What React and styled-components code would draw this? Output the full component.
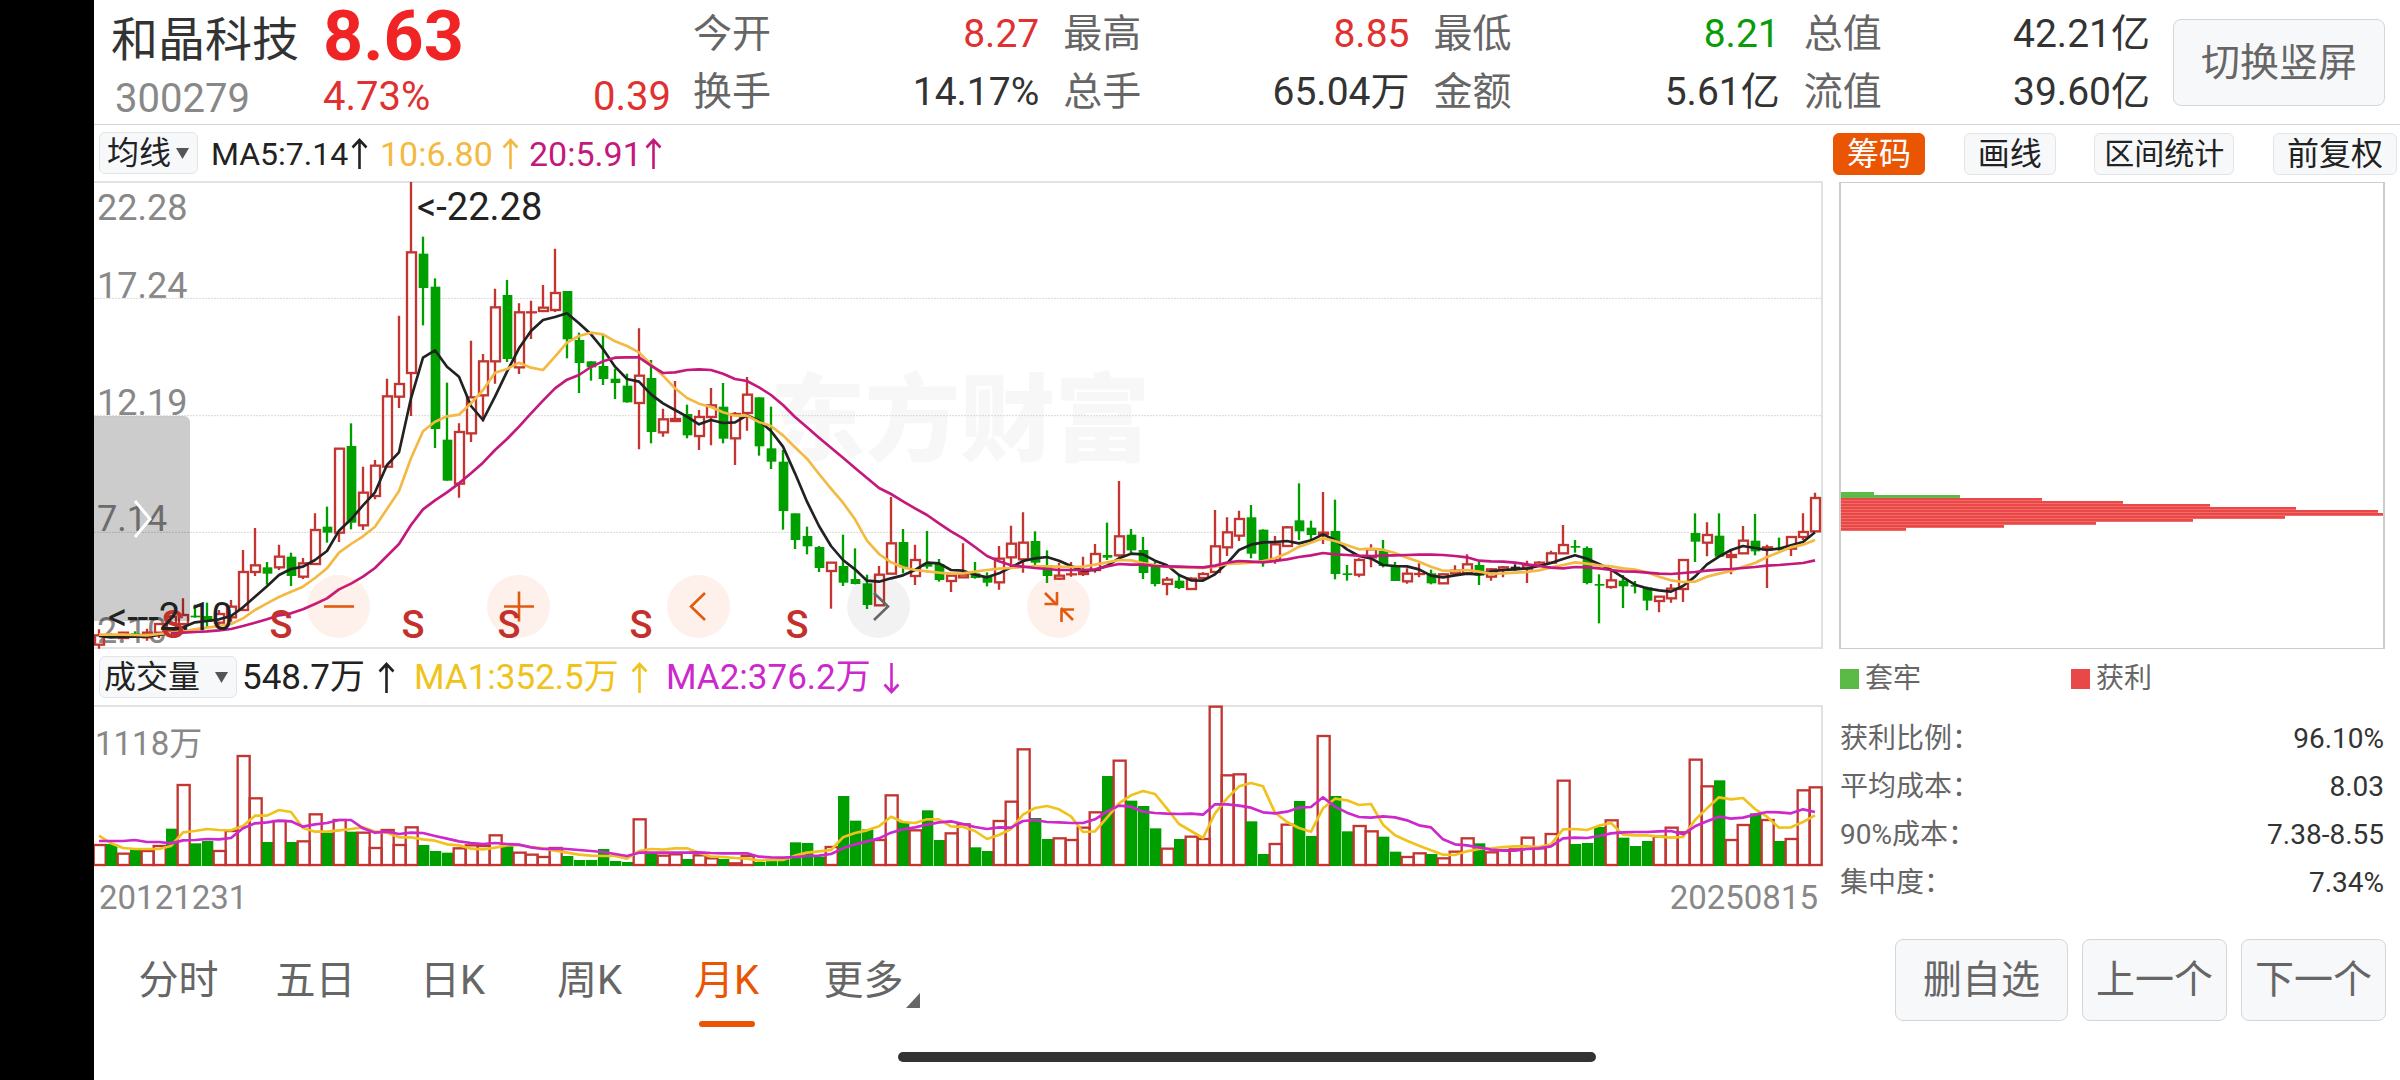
import React from "react";
import styled, { createGlobalStyle } from "styled-components";

/* ---------- chart data (three drawing units per pixel, one candle every 36 units) ---------- */

const STEP = 36;
const FIRST = 15;
const CHART_W = 5187;
const cx = (i) => FIRST + STEP * i;

// r / g / k, high, body top, body bottom, low
const candleBlocks = [
  [-36, [
    ["r",1378,1396,1424,1436],["g",1390,1393,1399,1402],["r",1388,1388,1404,1404],["g",1384,1390,1396,1400],["r",1376,1388,1402,1412],["r",1362,1362,1388,1404],
    ["r",1335,1340,1382,1385],["r",1285,1335,1362,1366],["g",1304,1337,1340,1343],["g",1298,1338,1356,1372],["r",1320,1332,1358,1366],["r",1290,1310,1342,1355],
    ["r",1140,1206,1320,1322],["r",1074,1186,1206,1218],["g",1176,1192,1211,1244],["r",1124,1160,1192,1200],["g",1148,1160,1218,1248],["r",1164,1180,1220,1227],
    ["r",1030,1080,1182,1184],["g",1010,1070,1088,1118],["r",836,836,1088,1116],["g",760,828,1058,1078],["r",890,968,1066,1080],["r",870,887,978,988],
    ["r",626,679,890,892],["r",437,642,680,714],["r",36,247,609,738],["g",200,251,354,466],["g",325,350,777,834],["g",638,809,932,932],
    ["r",760,786,941,983],["r",512,682,790,816],["r",552,574,676,755],["r",356,412,574,641],["g",330,375,567,576],["r",400,427,592,612],
    ["r",392,427,427,507],["r",345,413,423,425],["r",236,369,420,426],
  ]],
  [144, [
    ["g",183,183,328,385],["g",308,330,399,489],["g",394,394,412,452],["g",315,408,447,465],["g",416,446,459,507],["g",431,467,517,518],
    ["r",295,437,519,658],["g",390,444,606,640],["r",536,568,607,620],["r",453,567,573,574],["g",524,552,616,625],["r",540,561,618,660],
    ["r",474,526,561,646],["g",459,530,626,640],["r",546,552,625,705],["r",441,494,549,602],["g",502,502,649,677],["g",530,655,695,717],
    ["g",660,695,843,899],["g",850,850,930,957],["g",890,918,949,973],["g",948,951,1014,1026],["r",998,998,1023,1136],["g",914,1008,1058,1068],
    ["g",955,1047,1062,1063],["g",1034,1060,1125,1137],["r",1008,1034,1126,1127],["r",801,940,1031,1033],
  ]],
  [474, [
    ["g",567,606,682,700],["r",614,660,708,735],["g",573,670,680,686],["g",657,672,720,725],["r",700,707,723,756],["r",610,704,712,714],
    ["g",666,700,714,716],["g",697,710,728,739],["r",618,656,727,749],["r",557,611,652,672],["r",517,608,658,698],["g",574,603,668,676],
    ["g",631,675,708,729],["r",668,707,716,720],["r",666,703,703,710],["r",650,695,702,708],["r",612,642,690,698],["g",548,645,653,660],
    ["r",423,589,646,650],["g",567,584,631,640],["g",591,630,699,717],["g",665,676,732,739],["r",711,719,732,766],["g",705,722,744,747],
    ["r",712,716,747,748],["r",697,702,714,720],["r",510,619,696,698],["r",532,577,622,648],["r",512,537,587,603],["g",495,532,641,655],
    ["g",568,569,664,680],["r",588,613,660,671],["r",558,562,618,620],["g",430,541,574,600],["g",542,563,585,598],["r",456,578,582,612],
    ["g",479,573,702,718],
  ]],
  [834, [
    ["g",315,340,344,362],["r",295,300,344,352],["r",253,268,292,322],["g",240,272,318,322],["g",306,318,363,363],["r",325,341,364,371],
    ["r",310,342,342,352],["g",329,340,370,373],["r",340,343,370,371],["r",316,332,340,344],["r",283,313,340,342],["g",305,315,347,375],
    ["r",325,328,350,362],["r",318,322,330,352],["k",313,320,328,332],["r",302,316,326,369],["r",304,308,316,318],["r",272,280,308,310],
    ["r",195,255,280,282],["g",240,258,262,278],["g",259,264,369,373],["g",343,372,376,490],["r",328,361,381,386],["g",345,362,379,444],
    ["g",363,375,380,400],["g",380,382,422,451],["r",408,410,423,457],["r",372,386,415,428],["r",298,300,387,426],["g",160,219,245,306],
    ["r",187,225,248,289],["g",160,227,290,291],["r",270,285,291,343],["r",198,242,280,282],["g",162,242,274,286],["r",254,262,268,384],
    ["g",233,265,269,272],["r",229,231,266,288],["r",160,216,231,240],["r",98,114,214,216],
  ]],
];
const candles = candleBlocks.flatMap(([d, rows]) =>
  rows.map(([kind, ...v]) => ({ kind, v: v.map((n) => n + d) }))
);

const joinBlocks = (blocks) => blocks.flatMap(([d, ys]) => ys.map((y) => y + d));

const ma5 = joinBlocks([
  [-36, [1398,1402,1401,1400,1400,1395,1388,1372,1357,1353,1348,1338,1312,1280,1249,1215,1197,1190,1170,1143,1082,1048,1006,967,885,847,685,563,541,590,620,708,750,680,605,535,483,450,441]],
  [144, [250,280,313,357,410,447,455,493,520,540,560,583,570,579,577,556,572,603,650,730,815,888,948,990,1018,1052,1055,1045]],
  [474, [706,690,668,670,690,692,704,712,700,682,663,655,651,662,678,692,690,677,655,641,643,662,676,705,721,722,703,670,630,614,607,606,603,610,601,583,600]],
  [834, [268,288,295,315,318,319,328,347,352,346,341,343,334,330,328,325,318,309,297,286,296,312,329,352,374,385,391,395,378,350,313,290,270,258,264,270,266,256,246,217]],
]);

const ma10 = joinBlocks([
  [-36, [1394,1394,1394,1395,1396,1392,1388,1383,1378,1373,1368,1362,1345,1320,1300,1281,1265,1250,1224,1195,1148,1122,1099,1070,1017,963,865,784,755,739,734,700,660,608,597,578,593,600,560]],
  [144, [338,318,308,313,334,348,367,403,437,475,504,521,531,547,557,557,576,588,616,652,686,732,776,818,868,932,972,997]],
  [474, [682,690,694,698,701,700,695,690,686,684,681,678,679,680,681,680,674,667,660,661,669,675,681,682,683,684,680,672,670,668,663,655,640,620,608,595,603]],
  [834, [256,268,266,269,279,293,305,320,332,333,330,335,341,340,338,336,331,322,315,307,311,316,319,325,329,337,350,361,366,365,350,341,333,320,309,291,277,262,254,240]],
]);

const ma20Start = 6;
const ma20 = joinBlocks([
  [-36, [1390,1388,1386,1384,1381,1377,1368,1358,1348,1336,1330,1318,1302,1285,1258,1241,1220,1194,1158,1122,1065,1018,991,967,940,910,878,840,807,770,730,692,655]],
  [144, [449,435,411,394,383,382,382,407,429,427,420,418,420,431,447,453,472,495,525,561,592,623,653,683,714,744,774,792]],
  [474, [484,505,525,550,574,595,621,648,664,676,680,684,687,690,690,690,688,679,672,674,674,678,679,680,681,682,677,668,663,665,667,663,658,651,646,639,643]],
  [834, [285,287,288,287,286,285,284,284,285,288,292,302,304,305,308,313,318,323,325,321,322,325,330,334,335,338,341,342,339,336,332,329,327,324,321,317,315,312,309,301]],
]);

const volumes = [
  ["r",585],["g",582],["r",611],["g",600],["r",603],["r",588],["g",536],["r",405],["g",580],["g",573],["r",603],["r",543],["r",318],["r",445],["g",576],["r",513],["g",576],["r",574],["r",493],["g",548],
  ["r",510],["g",545],["r",548],["r",594],["r",540],["r",585],["r",532],["g",585],["g",603],["g",608],["r",595],["r",586],["r",588],["r",556],["g",586],["r",608],["r",614],["r",621],["r",594],["g",618],
  ["g",630],["g",630],["g",597],["g",633],["g",636],["r",508],["g",608],["r",617],["r",613],["g",627],["r",616],["r",625],["g",627],["r",640],["r",618],["g",636],["g",630],["g",626],["g",577],["g",579],
  ["g",620],["r",591],["g",438],["g",512],["g",538],["r",570],["r",436],["g",517],["r",541],["g",481],["g",570],["r",550],["r",523],["g",592],["g",603],["r",513],["r",455],["r",298],["g",504],["g",567],
  ["r",565],["r",570],["r",533],["r",487],["g",378],["r",332],["g",452],["g",468],["g",535],["r",596],["g",567],["r",560],["r",567],["r",170],["r",376],["r",373],["g",514],["g",612],["r",582],["r",524],
  ["g",453],["g",558],["r",258],["g",438],["g",544],["r",528],["r",544],["g",560],["g",605],["r",621],["r",610],["g",612],["r",625],["r",605],["r",565],["g",580],["r",607],["r",600],["r",598],["r",563],
  ["r",595],["r",552],["r",392],["g",582],["g",579],["g",531],["r",511],["g",563],["g",588],["g",573],["r",560],["r",533],["r",547],["r",329],["r",409],["g",391],["r",570],["r",525],["g",490],["r",510],
  ["g",573],["r",567],["r",421],["r",412],
].map(([kind, y]) => ({ kind, y: y - 168 }));

const volShort = joinBlocks([
  [-168, [557,580,594,597,597,597,588,547,543,537,540,541,528,497,497,480,486,534,545,545,541,537,532,545,548,562,562,568,572,583,586,596,598,593,586,585,591,595,602,608,614,617,618,618,626,603,597,599,595,595,608,620,621,624,626,632,630,630,617,608,604,600,562,549,541,529,500]],
  [-48, [396,399,388,388,409,411,423,447,435,417,374,354,348,358,379,426,424,383,340,316,303,312,356,402,423,444,370,325,289,279,289,368,396,414,425,355,326,331,345,342,404,436,452,467,481,494,495,484,477,475,471,469,469,471,463,418,417,420,407,399,434,436,436,440,443,441,390,355,322,328,324,357,380,413,412,396,376]],
]);
const volLong = joinBlocks([
  [-168, [573,573,573,570,576,576,580,571,570,567,568,564,535,520,517,512,514,530,523,519,510,510,535,548,545,552,548,549,558,566,574,579,582,579,582,584,592,597,596,597,600,603,606,612,618,608,608,608,608,608,607,609,610,610,610,620,622,623,621,618,617,612,595,583,574,565,548]],
  [-48, [418,412,404,397,394,402,411,417,412,413,393,390,396,397,399,399,388,365,347,350,365,369,371,372,371,374,343,343,347,353,367,370,365,353,351,322,350,368,381,383,379,382,391,406,412,448,463,466,472,479,482,482,477,475,469,445,443,444,438,430,427,426,426,424,423,433,409,394,380,386,383,374,366,367,370,358,366]],
]);

const linePoints = (ys, start = 0) => ys.map((y, i) => `${cx(i + start)},${y}`).join(" ");

const UP = "#c23531";
const DOWN = "#009f00";
const candleColor = { r: UP, g: DOWN, k: "#222222" };

const chipRows = [
  [33, "g"], [117, "g"], [201, "r"], [285, "r"], [370, "r"], [454, "r"], [538, "r"],
  [543, "r"], [447, "r"], [352, "r"], [257, "r"], [161, "r"], [66, "r"],
];

const quotes = [
  ["今开", "8.27", "up"], ["最高", "8.85", "up"], ["最低", "8.21", "down"], ["总值", "42.21亿"],
  ["换手", "14.17%"], ["总手", "65.04万"], ["金额", "5.61亿"], ["流值", "39.60亿"],
];

const priceTicks = [["22.28", 9], ["17.24", 87], ["12.19", 204], ["7.14", 320], ["2.10", 432]];
const signals = [79, 187, 319, 415, 547, 703];
const stats = [["获利比例：", "96.10%"], ["平均成本：", "8.03"], ["90%成本：", "7.38-8.55"], ["集中度：", "7.34%"]];
const periods = ["分时", "五日", "日K", "周K", "月K", "更多"];

/* ---------- styles ---------- */

const GlobalStyle = createGlobalStyle`
  * { box-sizing: border-box; }
  body { margin: 0; background: #fff; }
  body, button, select {
    font-family: Roboto, "Noto Sans CJK SC", sans-serif;
    color: #333;
  }
`;

const Screen = styled.div`
  display: flex;
  min-height: 100vh;
`;
const CutoutStrip = styled.div`
  flex: 0 0 94px;
  background: #000;
`;
const Main = styled.main`
  flex: 1;
  min-width: 0;
  display: flex;
  flex-direction: column;
`;

const Header = styled.header`
  display: flex;
  height: 125px;
  padding: 5px 15px 0 17px;
  border-bottom: 1px solid #d4d4d4;
`;
const Identity = styled.div`
  display: grid;
  grid-template-columns: 212px 348px;
  grid-template-rows: 62px 56px;
  width: 582px;
`;
const StockName = styled.h1`
  margin: 0;
  font-size: 47px;
  font-weight: 400;
  line-height: 70px;
`;
const LastPrice = styled.strong`
  font-size: 70px;
  font-weight: 700;
  line-height: 62px;
  color: #f02424;
`;
const StockCode = styled.span`
  padding-left: 4px;
  font-size: 40px;
  line-height: 64px;
  color: #888;
`;
const ChangeRow = styled.div`
  display: flex;
  justify-content: space-between;
  font-size: 40px;
  line-height: 60px;
  color: #e03030;
`;
const QuoteGrid = styled.dl`
  flex: 1;
  display: grid;
  grid-template-columns: repeat(4, 1fr);
  grid-auto-rows: 58px;
  column-gap: 24px;
  margin: 0 23px 0 0;
`;
const Quote = styled.div`
  display: flex;
  justify-content: space-between;
  line-height: 58px;
`;
const QuoteLabel = styled.dt`
  font-size: 39px;
  color: #666;
`;
const QuoteValue = styled.dd`
  margin: 0;
  font-size: 39px;
  color: ${(p) => (p.$tone === "up" ? "#e03030" : p.$tone === "down" ? "#089c08" : "#333")};
`;

const PanelButton = styled.button`
  height: ${(p) => p.$height}px;
  padding: 0 ${(p) => p.$pad}px;
  border: 1px solid #d4d6d9;
  border-radius: 8px;
  background: #f7f8fa;
  font-size: 39px;
  line-height: 40px;
  color: #666;
  white-space: nowrap;
`;
const RotateButton = styled(PanelButton)`
  margin-top: 14px;
  width: 212px;
`;

const Body = styled.div`
  display: grid;
  grid-template-columns: minmax(0, 1fr) 577px;
`;
const ChartColumn = styled.section``;
const Toolbar = styled.div`
  display: flex;
  align-items: center;
  height: 56px;
  padding: 0 5px;
`;
const SelectBox = styled.label`
  position: relative;
  display: block;
  margin-right: ${(p) => p.$gap}px;
  svg {
    position: absolute;
    right: 9px;
    top: 16px;
    pointer-events: none;
  }
`;
const Select = styled.select`
  appearance: none;
  display: block;
  width: ${(p) => p.$width}px;
  height: 42px;
  padding: 0 0 0 ${(p) => p.$pad}px;
  border: 1px solid #e2e5e8;
  border-radius: 6px;
  background: #f7f8fa;
  font-size: 32px;
  line-height: 40px;
  color: #222;
`;
const Reading = styled.span`
  display: flex;
  align-items: center;
  justify-content: space-between;
  width: ${(p) => p.$width}px;
  margin-right: ${(p) => p.$gap}px;
  padding-top: 2px;
  font-size: ${(p) => p.$size}px;
  line-height: 40px;
  white-space: nowrap;
  color: ${(p) => p.$color};
`;

const PriceChart = styled.div`
  position: relative;
`;
const Plot = styled.svg`
  position: relative;
  display: block;
  width: 100%;
  height: ${(p) => p.$height}px;
`;
const Watermark = styled.span`
  position: absolute;
  left: 676px;
  top: 172px;
  font-family: "Noto Sans CJK SC", sans-serif;
  font-size: 95px;
  font-weight: 900;
  line-height: 120px;
  color: #f7f7f7;
`;
const AxisLabel = styled.span`
  position: absolute;
  left: 3px;
  top: ${(p) => p.$top}px;
  font-size: 36px;
  line-height: 36px;
  color: #888;
`;
const VolumeLabel = styled(AxisLabel)`
  left: 1px;
  font-size: 33px;
`;
const Extreme = styled(AxisLabel)`
  left: ${(p) => p.$left}px;
  font-size: 38px;
  color: #222;
`;
const Signal = styled.span`
  position: absolute;
  left: ${(p) => p.$left}px;
  bottom: 5px;
  width: 28px;
  margin-left: -14px;
  text-align: center;
  font-size: 38px;
  font-weight: 500;
  line-height: 38px;
  color: #c4302b;
`;
const DrawerHandle = styled.button`
  position: absolute;
  left: 0;
  top: 235px;
  width: 96px;
  height: 205px;
  padding: 0;
  border: 0;
  border-radius: 0 6px 0 0;
  background: rgba(0, 0, 0, 0.2);
  svg { display: block; margin: 0 auto; }
`;
const ChartControls = styled.div`
  position: absolute;
  left: 213px;
  bottom: 11px;
  display: flex;
  gap: 117px;
`;
const RoundButton = styled.button`
  display: grid;
  place-items: center;
  width: 63px;
  height: 63px;
  padding: 0;
  border: 0;
  border-radius: 50%;
  background: ${(p) => (p.$muted ? "rgba(0, 0, 0, 0.05)" : "rgba(240, 90, 20, 0.09)")};
  color: ${(p) => (p.$muted ? "#666" : "#e05a10")};
`;
const Dates = styled.div`
  display: flex;
  justify-content: space-between;
  padding: 0 5px;
  font-size: 33px;
  line-height: 61px;
  color: #888;
`;

const ChipColumn = styled.aside`
  padding-right: 15px;
`;
const ChipTabs = styled.div`
  display: flex;
  justify-content: space-between;
  align-items: center;
  height: 57px;
  margin-right: -12px;
  padding-left: 10px;
`;
const ChipTab = styled.button`
  height: 42px;
  padding: 0 ${(p) => (p.$compact ? 9 : 13)}px;
  border: 1px solid ${(p) => (p.$active ? "#ea5504" : "#e2e5e8")};
  border-radius: 6px;
  background: ${(p) => (p.$active ? "#ea5504" : "#f7f8fa")};
  color: ${(p) => (p.$active ? "#fff" : "#222")};
  font-size: ${(p) => (p.$compact ? 30 : 32)}px;
  line-height: 40px;
  white-space: nowrap;
`;
const ChipBox = styled.div`
  height: 467px;
  margin-left: 16px;
  padding-top: 309px;
  border: solid #ccc;
  border-width: 1px 2px;
`;
const ChipBar = styled.div`
  height: 3px;
  width: ${(p) => p.$share}%;
  background: ${(p) => (p.$kind === "g" ? "#5bb946" : "#e84848")};
  border-bottom: 1px solid ${(p) => (p.$kind === "g" ? "#62bd4e" : "#f46a66")};
`;
const Legend = styled.div`
  display: grid;
  grid-template-columns: 231px 1fr;
  margin-left: 17px;
  padding-top: 11px;
`;
const LegendItem = styled.span`
  display: flex;
  align-items: center;
  gap: 6px;
  font-size: 28px;
  line-height: 38px;
  color: #666;
  &::before {
    content: "";
    width: 19px;
    height: 20px;
    background: ${(p) => p.$color};
  }
`;
const Stats = styled.dl`
  margin: 17px 1px 0 17px;
  font-size: 28px;
  line-height: 48px;
`;
const StatRow = styled.div`
  display: flex;
  justify-content: space-between;
`;
const StatLabel = styled.dt`
  color: #666;
`;
const StatValue = styled.dd`
  margin: 0;
`;

const Footer = styled.footer`
  display: flex;
  justify-content: space-between;
  padding: 11px 14px 0 16px;
`;
const PeriodTabs = styled.nav`
  display: flex;
`;
const PeriodTab = styled.button`
  position: relative;
  width: 137px;
  height: 82px;
  padding: 2px 0 0;
  border: 0;
  background: none;
  font-size: 40px;
  line-height: 80px;
  color: ${(p) => (p.$active ? "#ea5504" : "#666")};
  &::after {
    content: "";
    display: ${(p) => (p.$active ? "block" : "none")};
    position: absolute;
    left: 41px;
    bottom: -6px;
    width: 56px;
    height: 6px;
    border-radius: 3px;
    background: #ea5504;
  }
  svg {
    position: absolute;
    right: 12px;
    bottom: 13px;
  }
`;
const FooterActions = styled.div`
  display: flex;
  gap: 14px;
`;
const HomeBar = styled.div`
  width: 698px;
  height: 10px;
  margin: 31px auto 17px;
  border-radius: 5px;
  background: #333;
`;

/* ---------- small drawings ---------- */

const Caret = () => (
  <svg width="13" height="11" viewBox="0 0 13 11"><path d="M0 0h13L6.5 11z" fill="#555" /></svg>
);

const Arrow = ({ down }) => (
  <svg width="17" height="32" viewBox="0 0 17 32" fill="none" stroke="currentColor" strokeWidth="2.6">
    {down ? <path d="M8.500 1v29M1.500 22.500l7 7.500l7-7.500" /> : <path d="M8.500 31V2M1.500 9.500l7-7.500l7 7.500" />}
  </svg>
);

const icons = {
  minus: "M1 15.500h30",
  plus: "M1 15.500h30M16 0.500v30",
  left: "M22 2L8 15.500L22 29",
  right: "M11 2L25 15.500L11 29",
  collapse: "M2 2l12 12M1.500 13h12.500V1M30 29L18 17M31 18.500H18.500V31",
};
const ControlIcon = ({ name }) => (
  <svg width="32" height="32" viewBox="0 0 32 32" fill="none" stroke="currentColor" strokeWidth="2.6">
    <path d={icons[name]} />
  </svg>
);

const Candle = ({ i, kind, v: [high, top, bottom, low] }) => {
  const x = cx(i);
  const color = candleColor[kind];
  if (kind !== "r") {
    return (
      <g>
        <path d={`M${x} ${high}V${low}`} stroke={color} strokeWidth="7" />
        <rect x={x - 13} y={top} width="29" height={Math.max(bottom - top, 5)} fill={color} />
      </g>
    );
  }
  return (
    <g stroke={color} strokeWidth="7" fill="none">
      <path d={`M${x} ${high}V${top}M${x} ${bottom}V${low}`} />
      {bottom - top < 4 ? (
        <path d={`M${x - 15} ${top}h33`} />
      ) : (
        <rect x={x - 12} y={top} width="27" height={bottom - top} />
      )}
    </g>
  );
};

const VolumeBar = ({ i, kind, y }) =>
  kind === "g" ? (
    <rect x={cx(i) - 15} y={y} width="34" height={480 - y} fill={DOWN} />
  ) : (
    <rect x={cx(i) - 16} y={y} width="36" height={477 - y} fill="none" stroke={UP} strokeWidth="7" />
  );

const Trend = ({ ys, start, color }) => (
  <polyline points={linePoints(ys, start)} fill="none" stroke={color} strokeWidth="8" strokeLinejoin="round" />
);

/* ---------- page ---------- */

export default function App() {
  return (
    <Screen>
      <GlobalStyle />
      <CutoutStrip />
      <Main>
        <Header>
          <Identity>
            <StockName>和晶科技</StockName>
            <LastPrice>8.63</LastPrice>
            <StockCode>300279</StockCode>
            <ChangeRow><span>4.73%</span><span>0.39</span></ChangeRow>
          </Identity>
          <QuoteGrid>
            {quotes.map(([label, value, tone]) => (
              <Quote key={label}>
                <QuoteLabel>{label}</QuoteLabel>
                <QuoteValue $tone={tone}>{value}</QuoteValue>
              </Quote>
            ))}
          </QuoteGrid>
          <RotateButton $height={87} $pad={0}>切换竖屏</RotateButton>
        </Header>

        <Body>
          <ChartColumn>
            <Toolbar>
              <SelectBox $gap={13}>
                <Select $width={99} $pad={7} aria-label="均线"><option>均线</option></Select>
                <Caret />
              </SelectBox>
              <Reading $width={157} $gap={12} $size={32} $color="#222">MA5:7.14<Arrow /></Reading>
              <Reading $width={139} $gap={10} $size={34} $color="#f4b942">10:6.80<Arrow /></Reading>
              <Reading $width={133} $gap={0} $size={34} $color="#c4187c">20:5.91<Arrow /></Reading>
            </Toolbar>

            <PriceChart>
              <Watermark>东方财富</Watermark>
              {priceTicks.map(([text, top]) => <AxisLabel key={text} $top={top}>{text}</AxisLabel>)}
              <Plot $height={468} viewBox={`0 -3 ${CHART_W} 1404`} preserveAspectRatio="none">
                <path d={`M0 0H${CHART_W - 3}V1398H0`} fill="none" stroke="#e2e2e2" strokeWidth="6" />
                {[349, 701, 1051].map((y) => (
                  <path key={y} d={`M0 ${y}H${CHART_W - 6}`} stroke="#d9d9d9" strokeWidth="3" strokeDasharray="6 3" />
                ))}
                {candles.map((c, i) => <Candle key={i} i={i} {...c} />)}
                <Trend ys={ma5} color="#222" />
                <Trend ys={ma10} color="#f4b942" />
                <Trend ys={ma20} start={ma20Start} color="#c4187c" />
              </Plot>
              <Extreme $left={323} $top={8}>{"<-22.28"}</Extreme>
              <DrawerHandle aria-label="展开">
                <svg width="20" height="40" viewBox="0 0 20 40" fill="none" stroke="#fff" strokeWidth="3">
                  <path d="M3 2L18 20L3 38" />
                </svg>
              </DrawerHandle>
              <ChartControls>
                <RoundButton aria-label="缩小"><ControlIcon name="minus" /></RoundButton>
                <RoundButton aria-label="放大"><ControlIcon name="plus" /></RoundButton>
                <RoundButton aria-label="左移"><ControlIcon name="left" /></RoundButton>
                <RoundButton aria-label="右移" $muted><ControlIcon name="right" /></RoundButton>
                <RoundButton aria-label="收起"><ControlIcon name="collapse" /></RoundButton>
              </ChartControls>
              {signals.map((x) => <Signal key={x} $left={x}>S</Signal>)}
              <Extreme $left={14} $top={418}>{"<---2.10"}</Extreme>
            </PriceChart>

            <Toolbar>
              <SelectBox $gap={5}>
                <Select $width={138} $pad={4} aria-label="成交量"><option>成交量</option></Select>
                <Caret />
              </SelectBox>
              <Reading $width={153} $gap={19} $size={35} $color="#222">548.7万<Arrow /></Reading>
              <Reading $width={234} $gap={18} $size={35} $color="#efc31c">MA1:352.5万<Arrow /></Reading>
              <Reading $width={234} $gap={0} $size={35} $color="#cc28cc">MA2:376.2万<Arrow down /></Reading>
            </Toolbar>

            <PriceChart>
              <VolumeLabel $top={21}>1118万</VolumeLabel>
              <Plot $height={162} viewBox={`0 -3 ${CHART_W} 486`} preserveAspectRatio="none">
                <path d={`M0 0H${CHART_W - 3}V480`} fill="none" stroke="#e2e2e2" strokeWidth="6" />
                {volumes.map((v, i) => <VolumeBar key={i} i={i} {...v} />)}
                <Trend ys={volShort} color="#efc31c" />
                <Trend ys={volLong} color="#cc28cc" />
              </Plot>
            </PriceChart>
            <Dates><span>20121231</span><span>20250815</span></Dates>
          </ChartColumn>

          <ChipColumn>
            <ChipTabs>
              <ChipTab $active>筹码</ChipTab>
              <ChipTab>画线</ChipTab>
              <ChipTab $compact>区间统计</ChipTab>
              <ChipTab>前复权</ChipTab>
            </ChipTabs>
            <ChipBox>
              {chipRows.map(([w, kind], i) => <ChipBar key={i} $share={Math.round((w / 543) * 100)} $kind={kind} />)}
            </ChipBox>
            <Legend>
              <LegendItem $color="#5bb946">套牢</LegendItem>
              <LegendItem $color="#e84848">获利</LegendItem>
            </Legend>
            <Stats>
              {stats.map(([label, value]) => (
                <StatRow key={label}>
                  <StatLabel>{label}</StatLabel>
                  <StatValue>{value}</StatValue>
                </StatRow>
              ))}
            </Stats>
          </ChipColumn>
        </Body>

        <Footer>
          <PeriodTabs>
            {periods.map((name) => (
              <PeriodTab key={name} $active={name === "月K"}>
                {name}
                {name === "更多" && (
                  <svg width="14" height="15" viewBox="0 0 14 15"><path d="M14 0v15H0z" fill="#666" /></svg>
                )}
              </PeriodTab>
            ))}
          </PeriodTabs>
          <FooterActions>
            <PanelButton $height={82} $pad={27}>删自选</PanelButton>
            <PanelButton $height={82} $pad={13}>上一个</PanelButton>
            <PanelButton $height={82} $pad={13}>下一个</PanelButton>
          </FooterActions>
        </Footer>
        <HomeBar />
      </Main>
    </Screen>
  );
}
